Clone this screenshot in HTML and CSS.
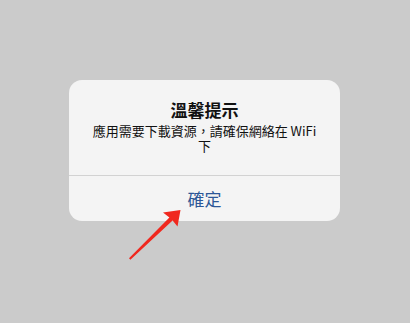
FILE: index.html
```html
<!DOCTYPE html>
<html lang="zh-Hant">
<head>
<meta charset="utf-8">
<link rel="stylesheet" href="styles.css">
</head>
<body>
<div class="stage">
  <div class="dialog">
    <div class="content">
      <div class="title">溫馨提示</div>
      <div class="message">應用需要下載資源，請確保網絡在 WiFi 下</div>
    </div>
    <div class="actions">
      <div class="button">確定</div>
    </div>
  </div>
  <svg class="arrow" width="410" height="323" viewBox="0 0 410 323">
    <path d="M129 258.3 L130.4 259.8 L172.6 220.6 L177.5 226.5 L180.5 210 L163 212.5 L169.4 217.4 Z" fill="#f0281e"/>
  </svg>
</div>
</body>
</html>
```

FILE: styles.css
```css
html, body {
  margin: 0;
  padding: 0;
  background: #cbcbcb;
}
.stage {
  position: relative;
  width: 410px;
  height: 323px;
  padding: 80px 0 0 69px;
  box-sizing: border-box;
  font-family: "Noto Sans CJK TC", "Noto Sans CJK SC", "Liberation Sans", sans-serif;
}
.dialog {
  width: 271px;
  height: 141px;
  background: #f4f4f4;
  border-radius: 13px;
  display: flex;
  flex-direction: column;
  overflow: hidden;
}
.content {
  height: 96px;
  box-sizing: border-box;
  padding: 19px 16px 0;
  text-align: center;
  border-bottom: 1px solid #d2d2d2;
  color: #111;
}
.title {
  font-size: 17px;
  font-weight: 700;
  line-height: 22px;
}
.message {
  margin-top: 2px;
  font-size: 13px;
  line-height: 15px;
}
.actions {
  flex: 1;
  display: flex;
  align-items: center;
  justify-content: center;
}
.button {
  font-size: 17px;
  color: #2c5797;
  line-height: 22px;
  margin-top: 1px;
}
.arrow {
  position: absolute;
  left: 0;
  top: 0;
}
```
